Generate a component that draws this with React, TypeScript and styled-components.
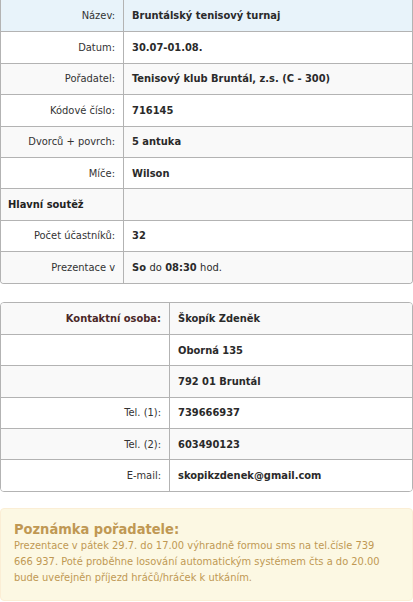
import React from "react";
import styled, { createGlobalStyle } from "styled-components";

const Global = createGlobalStyle`
  html, body {
    margin: 0;
    padding: 0;
    background: #fff;
  }
  body {
    font-family: "DejaVu Sans Condensed", "DejaVu Sans", Verdana, sans-serif;
    font-stretch: condensed;
    font-size: 11px;
    color: #333;
  }
`;

const Stranka = styled.div`
  width: 413px;
  display: flex;
  flex-direction: column;
  gap: 18px;
`;

const Tabulka = styled.table`
  width: 413px;
  border-collapse: separate;
  border-spacing: 0;
  border: 1px solid #b3b3b3;
  border-radius: 4px;
  overflow: hidden;

  &:first-child {
    border-top: none;
    border-top-left-radius: 0;
    border-top-right-radius: 0;
  }
`;

const Radek = styled.tr<{ $pozadi: string; $prvni?: boolean }>`
  background: ${({ $pozadi }) => $pozadi};

  td {
    border-top: ${({ $prvni }) => ($prvni ? "none" : "1px solid #b3b3b3")};
  }
`;

const Bunka = styled.td`
  height: 31.4px;
  padding: 0 8px;
  line-height: 15px;
  vertical-align: middle;
  box-sizing: border-box;
`;

const Popis = styled(Bunka)<{ $sirka: number }>`
  width: ${({ $sirka }) => $sirka}px;
  text-align: right;
  border-right: 1px solid #b3b3b3;
  color: #333;
`;

const KontaktPopis = styled(Popis)`
  font-weight: bold;
  color: #4a2828;
`;

const Sekce = styled(Bunka)`
  width: 123px;
  font-weight: bold;
  text-align: left;
  padding-left: 7px;
  border-right: 1px solid #b3b3b3;
  color: #222;
`;

const Hodnota = styled(Bunka)`
  font-weight: bold;
  color: #2a2a2a;
`;

const Light = styled.span`
  font-weight: normal;
`;

const Poznamka = styled.div`
  margin-top: -2px;
  background: #fcf8e3;
  border: 1px solid #fbeed5;
  border-radius: 4px;
  padding: 12px 30px 14px 13px;
  color: #c09853;
`;

const PoznamkaNadpis = styled.div`
  font-size: 14.5px;
  font-weight: bold;
  line-height: 17px;
  color: #c09853;
`;

const PoznamkaText = styled.div`
  font-size: 11px;
  line-height: 16px;
`;

type Row = { label: React.ReactNode; value?: React.ReactNode; section?: boolean };

const App: React.FC = () => {
  const turnaj: Row[] = [
    { label: "Název:", value: "Bruntálský tenisový turnaj" },
    { label: "Datum:", value: "30.07-01.08." },
    { label: "Pořadatel:", value: "Tenisový klub Bruntál, z.s. (C - 300)" },
    { label: "Kódové číslo:", value: "716145" },
    { label: "Dvorců + povrch:", value: "5 antuka" },
    { label: "Míče:", value: "Wilson" },
    { label: "Hlavní soutěž", section: true },
    { label: "Počet účastníků:", value: "32" },
    {
      label: "Prezentace v",
      value: (
        <>
          So <Light>do</Light> 08:30 <Light>hod.</Light>
        </>
      ),
    },
  ];

  const kontakt: Row[] = [
    { label: "Oborná 135" },
    { label: "792 01 Bruntál" },
    { label: "Tel. (1):", value: "739666937" },
    { label: "Tel. (2):", value: "603490123" },
    { label: "E-mail:", value: "skopikzdenek@gmail.com" },
  ];

  return (
    <Stranka>
      <Global />
      <Tabulka>
        <tbody>
          {turnaj.map((r, i) => (
            <Radek key={i} $pozadi={i === 0 ? "#e8f3fa" : i % 2 === 0 ? "#f9f9f9" : "#fff"} $prvni={i === 0}>
              {r.section ? (
                <>
                  <Sekce>{r.label}</Sekce>
                  <Hodnota />
                </>
              ) : (
                <>
                  <Popis $sirka={123}>{r.label}</Popis>
                  <Hodnota>{r.value}</Hodnota>
                </>
              )}
            </Radek>
          ))}
        </tbody>
      </Tabulka>

      <Tabulka>
        <tbody>
          <Radek $pozadi="#f9f9f9" $prvni>
            <KontaktPopis $sirka={169}>Kontaktní osoba:</KontaktPopis>
            <Hodnota>Škopík Zdeněk</Hodnota>
          </Radek>
          {kontakt.map((r, i) => (
            <Radek key={i} $pozadi={i % 2 === 1 ? "#f9f9f9" : "#fff"}>
              {r.value === undefined ? (
                <>
                  <Popis $sirka={169} />
                  <Hodnota>{r.label}</Hodnota>
                </>
              ) : (
                <>
                  <Popis $sirka={169}>{r.label}</Popis>
                  <Hodnota>{r.value}</Hodnota>
                </>
              )}
            </Radek>
          ))}
        </tbody>
      </Tabulka>

      <Poznamka>
        <PoznamkaNadpis>Poznámka pořadatele:</PoznamkaNadpis>
        <PoznamkaText>
          Prezentace v pátek 29.7. do 17.00 výhradně formou sms na tel.čísle 739 666 937. Poté proběhne losování
          automatickým systémem čts a do 20.00 bude uveřejněn příjezd hráčů/hráček k utkáním.
        </PoznamkaText>
      </Poznamka>
    </Stranka>
  );
};

export default App;
